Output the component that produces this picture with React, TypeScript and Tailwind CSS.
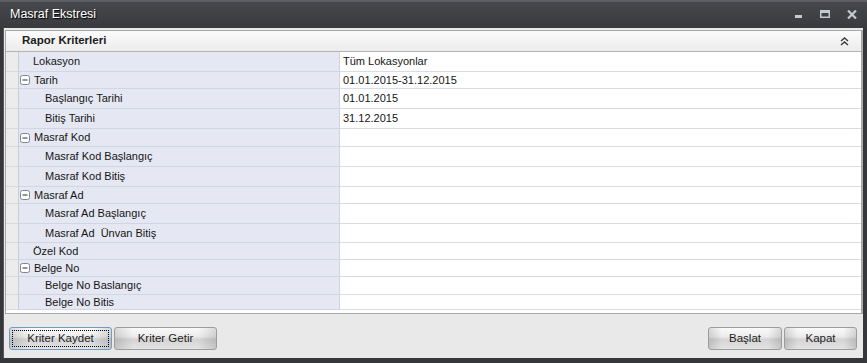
import React from "react";

type Row = { label: string; value?: string; level: 0 | 1; group?: boolean; h: number };

const rows: Row[] = [
  { label: "Lokasyon", value: "Tüm Lokasyonlar", level: 0, h: 20 },
  { label: "Tarih", value: "01.01.2015-31.12.2015", level: 0, group: true, h: 17 },
  { label: "Başlangıç Tarihi", value: "01.01.2015", level: 1, h: 20 },
  { label: "Bitiş Tarihi", value: "31.12.2015", level: 1, h: 20 },
  { label: "Masraf Kod", level: 0, group: true, h: 18 },
  { label: "Masraf Kod Başlangıç", level: 1, h: 20 },
  { label: "Masraf Kod Bitiş", level: 1, h: 20 },
  { label: "Masraf Ad", level: 0, group: true, h: 17 },
  { label: "Masraf Ad Başlangıç", level: 1, h: 20 },
  { label: "Masraf Ad  Ünvan Bitiş", level: 1, h: 19 },
  { label: "Özel Kod", level: 0, h: 17 },
  { label: "Belge No", level: 0, group: true, h: 17 },
  { label: "Belge No Baslangıç", level: 1, h: 18 },
  { label: "Belge No Bitis", level: 1, h: 15 },
];

function Minus() {
  return (
    <svg width="10" height="10" viewBox="0 0 10 10" className="shrink-0">
      <rect x="0.5" y="0.5" width="9" height="9" rx="2" fill="#fff" stroke="#7d8592" />
      <line x1="2.5" y1="5" x2="7.5" y2="5" stroke="#2b2b2b" strokeWidth="1" />
    </svg>
  );
}

function Btn({ label, w, focus }: { label: string; w: string; focus?: boolean }) {
  return (
    <button
      className={`${w} h-[23px] rounded-[3px] border text-[11.5px] text-[#1e1e1e] ${
        focus
          ? "border-[#6f9cc6] outline-1 outline-dotted outline-black -outline-offset-4"
          : "border-[#9c9c9c]"
      } bg-[image:linear-gradient(to_right,rgba(0,0,0,0.13),rgba(0,0,0,0)_18%,rgba(0,0,0,0)_82%,rgba(0,0,0,0.13)),linear-gradient(to_bottom,#fafafa,#ececec_40%,#d4d4d4_55%,#e4e4e4)]`}
    >
      {label}
    </button>
  );
}

export default function App() {
  return (
    <div className="w-[867px] h-[363px] flex flex-col bg-[#36373a] font-['Liberation_Sans',Arial,sans-serif] overflow-hidden">
      {/* title bar */}
      <div className="h-[28px] flex items-center border-t-2 border-[#5c5f64] bg-[linear-gradient(to_bottom,#46484c,#393b3f)] pl-[10px] pr-[10px]">
        <span className="text-white text-[12.5px] [text-shadow:1px_1px_1px_#000] -mt-[2px]">Masraf Ekstresi</span>
        <div className="ml-auto flex items-center gap-[17px] -mt-[2px]">
          <svg width="8" height="8" viewBox="0 0 8 8">
            <rect x="0" y="5" width="7" height="3" fill="#c5cad1" />
          </svg>
          <svg width="10" height="8" viewBox="0 0 10 8">
            <rect x="0.75" y="0.75" width="8.5" height="6.5" fill="none" stroke="#c5cad1" strokeWidth="1.5" />
            <rect x="0" y="0" width="10" height="3" fill="#c5cad1" />
          </svg>
          <svg width="10" height="9" viewBox="0 0 10 9">
            <path d="M1 0.5 L9 8.5 M9 0.5 L1 8.5" stroke="#c5cad1" strokeWidth="2.2" />
          </svg>
        </div>
      </div>

      {/* body */}
      <div className="flex-1 ml-[3px] mr-[4px] mb-[5px] bg-[#e9e9e9] flex flex-col border-l border-[#58595b]">
        <div className="mt-[2px] ml-[1px] border border-r-2 border-[#a9a9a9] bg-white flex flex-col">
          <div className="h-[21px] flex items-center border-b border-[#b4b4b4] bg-[linear-gradient(to_bottom,#fbfbfb,#ececec)] pl-[16px] pr-[12px]">
            <span className="font-bold text-[11.5px] text-[#202020]">Rapor Kriterleri</span>
            <svg className="ml-auto" width="9" height="9" viewBox="0 0 9 9">
              <path d="M1 4 L4.5 1 L8 4 M1 8 L4.5 5 L8 8" fill="none" stroke="#3a3a3a" strokeWidth="1.4" />
            </svg>
          </div>
          <div className="flex flex-col">
            {rows.map((r) => (
              <div key={r.label} className="flex" style={{ height: r.h }}>
                <div className="w-[13px] shrink-0 bg-[#ececec] border-r border-b border-r-[#c9cdd6] border-b-[#d9d9d9]" />
                <div className="w-[321px] shrink-0 flex items-center bg-[#e5e8f2] border-r border-b border-r-[#cfd4e0] border-b-[#d0d6e3] text-[11px] text-[#151515]">
                  {r.group ? (
                    <div className="flex items-center pl-[1px] gap-[4px]">
                      <Minus />
                      <span>{r.label}</span>
                    </div>
                  ) : (
                    <span className={`whitespace-pre ${r.level === 1 ? "pl-[26px]" : "pl-[14px]"}`}>{r.label}</span>
                  )}
                </div>
                <div className="flex-1 flex items-center pl-[3px] border-b border-[#d7dce7] text-[11px] text-[#151515]">
                  {r.value}
                </div>
              </div>
            ))}
          </div>
          <div className="h-[3px]" />
        </div>

        <div className="flex-1 flex items-start pt-[13px] pl-[5px] pr-[6px]">
          <div className="flex gap-[2px]">
            <Btn label="Kriter Kaydet" w="w-[103px]" focus />
            <Btn label="Kriter Getir" w="w-[103px]" />
          </div>
          <div className="ml-auto flex gap-[2px]">
            <Btn label="Başlat" w="w-[74px]" />
            <Btn label="Kapat" w="w-[73px]" />
          </div>
        </div>
      </div>
    </div>
  );
}
